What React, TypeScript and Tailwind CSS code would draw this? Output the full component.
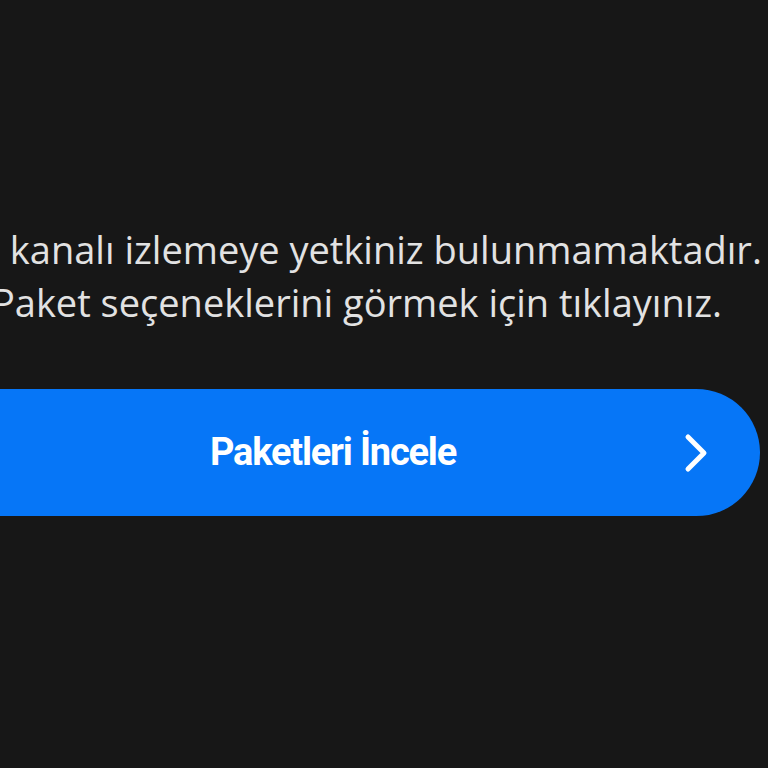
import React from 'react';

export default function App() {
  return (
    <div className="w-[768px] h-[768px] overflow-hidden bg-[#171717]">
      <div className="ml-[-100px] w-[914px] pt-[223px] flex flex-col">
        <p className="text-center text-[#e2e2e2] text-[38px] font-medium leading-[53px] font-['Open_Sans',sans-serif]">
          Bu kanalı izlemeye yetkiniz bulunmamaktadır.
          <br />
          Paket seçeneklerini görmek için tıklayınız.
        </p>
        <button className="mt-[60px] ml-[6px] w-[854px] h-[127px] rounded-full bg-[#0676f7] flex items-center relative">
          <span className="flex-1 text-center text-white font-bold text-[38px] tracking-[-1.2px] font-['Roboto',sans-serif]">
            Paketleri İncele
          </span>
          <svg
            className="absolute right-[50px] top-1/2 -translate-y-1/2 w-[28px] h-[40px]"
            viewBox="0 0 28 40"
            fill="none"
            stroke="white"
            strokeWidth="5"
            strokeLinecap="round"
            strokeLinejoin="round"
          >
            <path d="M6 4 L22 20 L6 36" />
          </svg>
        </button>
      </div>
    </div>
  );
}
